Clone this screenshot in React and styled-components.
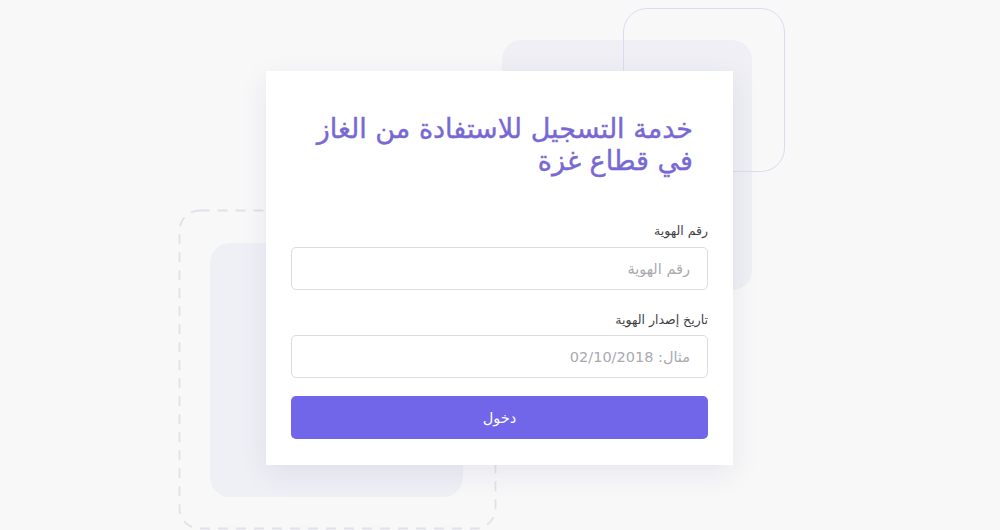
import React from 'react';
import styled, { createGlobalStyle } from 'styled-components';

const GlobalStyle = createGlobalStyle`
  html, body {
    margin: 0;
    padding: 0;
    background: #f8f8f9;
  }
  * {
    box-sizing: border-box;
  }
`;

const Stage = styled.div`
  position: relative;
  width: 1000px;
  height: 530px;
  overflow: hidden;
  display: flex;
  justify-content: center;
  align-items: flex-start;
  padding-top: 71px;
  font-family: "DejaVu Sans", "Noto Sans", sans-serif;
`;

const Blob = styled.div`
  position: absolute;
  left: ${(p) => p.x}px;
  top: ${(p) => p.y}px;
  width: ${(p) => p.w}px;
  height: ${(p) => p.h}px;
  border-radius: ${(p) => p.r || 20}px;
  background: ${(p) => p.fill || 'transparent'};
  border: ${(p) => p.line || 'none'};
`;

const DashedFrame = styled.svg`
  position: absolute;
  left: 178px;
  top: 209px;
`;

const Card = styled.form`
  position: relative;
  z-index: 1;
  width: 467px;
  margin-left: -1px;
  background: #ffffff;
  padding: 42px 25px 26px;
  box-shadow: 0 8px 28px rgba(40, 40, 90, 0.08);
  direction: rtl;
  display: flex;
  flex-direction: column;
`;

const Title = styled.h1`
  margin: 0 15px 44px 0;
  font-size: 27px;
  line-height: 32px;
  font-weight: 400;
  color: #7768d4;
  text-align: right;
  -webkit-text-stroke: 0.4px #7768d4;
`;

const Label = styled.label`
  font-size: 12.5px;
  line-height: 20px;
  color: #3f3f46;
  margin-bottom: ${(p) => p.gap || 6}px;
`;

const Input = styled.input`
  height: 43px;
  width: 100%;
  border: 1px solid #dcdce0;
  border-radius: 5px;
  padding: 0 17px;
  font-family: inherit;
  font-size: 14.5px;
  color: #333;
  background: #fff;
  margin-bottom: ${(p) => p.gap || 0}px;
  outline: none;
  direction: rtl;

  &::placeholder {
    color: #a9a9b0;
  }
`;

const Submit = styled.button`
  height: 43px;
  width: 100%;
  border: none;
  border-radius: 5px;
  background: #7166e9;
  color: #ffffff;
  font-family: inherit;
  font-size: 14.5px;
  cursor: pointer;
`;

export default function App() {
  return (
    <>
      <GlobalStyle />
      <Stage>
        <Blob x={502} y={40} w={250} h={250} fill="#efeff5" />
        <Blob x={623} y={8} w={162} h={164} r={24} line="1.5px solid #dcdcf1" />
        <Blob x={210} y={243} w={253} h={254} fill="#efeff6" />
        <DashedFrame width="320" height="322" viewBox="0 0 320 322">
          <rect
            x="1.5"
            y="1.5"
            width="316"
            height="318"
            rx="20"
            fill="none"
            stroke="#e1e1ea"
            strokeWidth="1.8"
            strokeDasharray="10 8"
          />
        </DashedFrame>
        <Card onSubmit={(e) => e.preventDefault()}>
          <Title>
            خدمة التسجيل للاستفادة من الغاز
            <br />
            في قطاع غزة
          </Title>
          <Label>رقم الهوية</Label>
          <Input placeholder="رقم الهوية" gap={20} />
          <Label gap={5}>تاريخ إصدار الهوية</Label>
          <Input placeholder="مثال: 02/10/2018" gap={18} />
          <Submit type="submit">دخول</Submit>
        </Card>
      </Stage>
    </>
  );
}
